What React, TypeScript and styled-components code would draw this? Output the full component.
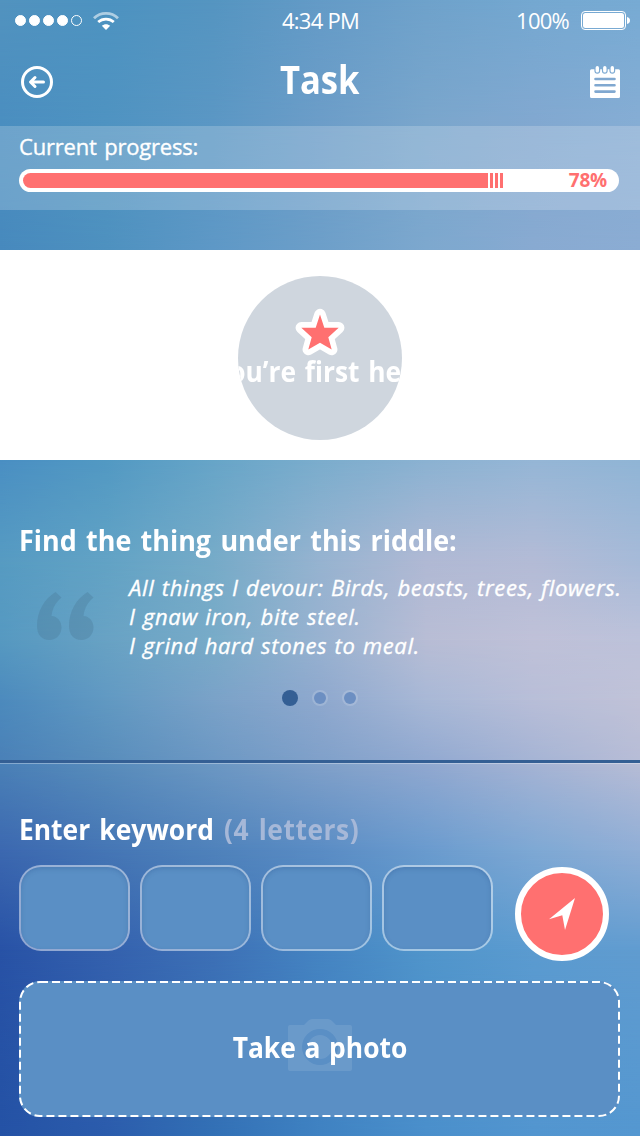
import React from "react";
import styled, { createGlobalStyle } from "styled-components";

const CORAL = "#ff7070";
const NAVY = "#345f94";
const FIELD = "#5a8fc5";

const GlobalStyle = createGlobalStyle`
  *, *::before, *::after { box-sizing: border-box; }
  body { margin: 0; }
  h1, h2, p { margin: 0; }
  button, input { font: inherit; margin: 0; padding: 0; border: 0; background: none; }
`;

/* Colour mesh behind the screen: each row blends into the next one. */
const mesh: { y: number; colors: string[] }[] = [
  { y: 0, colors: ["#5293bf", "#4d93c1", "#5595c1", "#649bc7", "#6fa2cb", "#74a8d1", "#77abd4"] },
  { y: 125, colors: ["#4a8ec0", "#4f93c1", "#5b97c4", "#6c9dc8", "#7aa6cc", "#82a8d0", "#86add4"] },
  { y: 250, colors: ["#4789bd", "#4e91bf", "#5e98c6", "#6d9fc9", "#7da8ce", "#88aad1", "#8bacd3"] },
  { y: 460, colors: ["#4a8fc3", "#5299c3", "#67a5c8", "#7badcd", "#8bb2d2", "#95b6d6", "#90b5d6"] },
  { y: 560, colors: ["#569bc2", "#62a3c5", "#76abc8", "#96b3d0", "#b0b9d4", "#b3bbd6", "#a6bad8"] },
  { y: 640, colors: ["#5699c1", "#68a2c4", "#78abc8", "#98b2d0", "#b8bdd5", "#bfc1d8", "#bdc2da"] },
  { y: 700, colors: ["#4c8abd", "#6199c2", "#7aa2c8", "#8ea8ce", "#a8b8d6", "#b8bed8", "#c0c2d8"] },
  { y: 765, colors: ["#4a80b7", "#588cbb", "#6b97c3", "#7fa0c9", "#90a8d0", "#a4b3d4", "#b6bcd6"] },
  { y: 850, colors: ["#3c68b0", "#4576b5", "#4f82bb", "#5a8cc4", "#6a9bce", "#7ea8d4", "#90aed6"] },
  { y: 950, colors: ["#2852a6", "#3461ae", "#3d70b6", "#4584c2", "#5095cb", "#5b9bd0", "#609cd0"] },
  { y: 1136, colors: ["#2452a5", "#2b5cac", "#3270b5", "#3f82c2", "#4a8fcb", "#5295cf", "#5497d0"] },
];

const Screen = styled.main`
  position: relative;
  isolation: isolate;
  display: flex;
  flex-direction: column;
  width: 640px;
  height: 1136px;
  overflow: hidden;
  color: #fff;
  font-family: "Open Sans", "Noto Sans", sans-serif;
`;

const MeshLayer = styled.div<{ $from: number; $to: number; $colors: string[] }>`
  position: absolute;
  inset: 0;
  z-index: -1;
  background: linear-gradient(to right, ${(p) => p.$colors.join(", ")});
  mask-image: linear-gradient(to bottom, transparent ${(p) => p.$from}px, #000 ${(p) => p.$to}px);
`;

const Header = styled.header`
  display: flex;
  flex-direction: column;
  height: 250px;
`;

const StatusBar = styled.div`
  display: grid;
  grid-template-columns: 1fr auto 1fr;
  align-items: center;
  height: 41px;
  padding: 0 10px 0 15px;
`;

const StatusGroup = styled.div<{ $end?: boolean }>`
  display: flex;
  align-items: center;
  justify-content: ${(p) => (p.$end ? "flex-end" : "flex-start")};
  gap: 11px;
`;

const Signal = styled.div`
  display: flex;
  gap: 3px;
`;

const SignalDot = styled.span<{ $empty?: boolean }>`
  width: 11px;
  height: 11px;
  border: 1px solid #fff;
  border-radius: 50%;
  background: ${(p) => (p.$empty ? "transparent" : "#fff")};
`;

const StatusText = styled.span`
  padding-right: 1px;
  font-size: 22px;
  line-height: 41px;
  letter-spacing: -0.75px;
  white-space: nowrap;
`;

const Clock = styled(StatusText)`
  padding-right: 4px;
`;

const NavBar = styled.nav`
  display: grid;
  grid-template-columns: 34px 1fr 34px;
  align-items: center;
  height: 85px;
  padding: 0 18px 3px 20px;
`;

const IconButton = styled.button`
  display: flex;
  justify-content: center;
  color: #fff;
`;

const Title = styled.h1`
  text-align: center;
  font-size: 40px;
  line-height: 54px;
  font-weight: 700;
  transform: scaleX(0.865);
  padding: 0 3px 6px 0;
`;

const ProgressPanel = styled.section`
  height: 84px;
  padding: 6px 20px 0 19px;
  background: rgba(255, 255, 255, 0.2);
`;

const ProgressLabel = styled.p`
  font-size: 22px;
  line-height: 29px;
  letter-spacing: -0.2px;
  word-spacing: 2px;
  -webkit-text-stroke: 0.35px currentColor;
`;

const ProgressTrack = styled.div`
  display: flex;
  align-items: center;
  width: 600px;
  height: 23px;
  margin-top: 8px;
  padding: 0 12px 0 4px;
  border-radius: 12px;
  background: #fff;
`;

const ProgressFill = styled.div`
  width: 465px;
  height: 15px;
  border-radius: 8px 0 0 8px;
  background: ${CORAL};
`;

const ProgressTick = styled.span`
  width: 3px;
  height: 15px;
  margin-left: 2px;
  background: ${CORAL};
`;

const ProgressValue = styled.span`
  margin-left: auto;
  color: ${CORAL};
  font-size: 19px;
  line-height: 23px;
  font-weight: 700;
  letter-spacing: -0.2px;
`;

const Banner = styled.section`
  display: flex;
  align-items: center;
  justify-content: center;
  height: 210px;
  padding-bottom: 4px;
  padding-top: 8px;
  background: #fff;
`;

const Badge = styled.div`
  display: flex;
  flex-direction: column;
  align-items: center;
  width: 164px;
  height: 164px;
  margin-bottom: -2px;
  padding-top: 31px;
  border-radius: 50%;
  overflow: hidden;
  background: #cfd6de;
`;

const BadgeText = styled.p`
  margin-top: -4px;
  padding-left: 10px;
  font-size: 28px;
  line-height: 36px;
  font-weight: 700;
  white-space: nowrap;
  word-spacing: 2px;
  transform: scaleX(0.94);
`;

const Riddle = styled.section`
  display: flex;
  flex-direction: column;
  height: 300px;
  padding: 61px 19px 0;
`;

const Heading = styled.h2<{ $scale: number }>`
  align-self: flex-start;
  font-size: 29px;
  line-height: 38px;
  font-weight: 700;
  white-space: nowrap;
  word-spacing: 2.5px;
  transform: scaleX(${(p) => p.$scale});
  transform-origin: left;
`;

const RiddleBody = styled.div`
  display: flex;
  margin-top: 14px;
`;

const QuoteMark = styled.svg`
  flex: none;
  width: 58px;
  height: 50px;
  margin: 18px 35px 0 17px;
`;

const RiddleText = styled.p`
  font-size: 22px;
  line-height: 29px;
  font-style: italic;
  letter-spacing: 0.65px;
  word-spacing: 1px;
  white-space: nowrap;
  -webkit-text-stroke: 0.35px currentColor;
`;

const Pager = styled.div`
  display: flex;
  justify-content: center;
  align-items: center;
  gap: 14px;
  margin-top: 30px;
`;

const PagerDot = styled.span<{ $active?: boolean }>`
  width: 16px;
  height: 16px;
  border-radius: 50%;
  border: ${(p) => (p.$active ? "0" : "2px solid rgba(255, 255, 255, 0.15)")};
  background: ${(p) => (p.$active ? NAVY : "#6c8fc2")};
  background-clip: padding-box;
`;

const Answer = styled.section`
  display: flex;
  flex-direction: column;
  height: 376px;
  padding: 47px 19px 0;
  border-top: 3px solid ${NAVY};
  box-shadow: inset 0 1px 0 rgba(255, 255, 255, 0.32);
`;

const Hint = styled.span`
  margin-left: 1px;
  color: #a6b8d8;
  letter-spacing: 0.6px;
`;

const KeywordRow = styled.form`
  display: flex;
  gap: 10px;
  height: 96px;
  margin-top: 17px;
`;

const LetterField = styled.input`
  width: 111px;
  height: 86px;
  border: 2px solid rgba(255, 255, 255, 0.48);
  border-radius: 22px;
  background: ${FIELD};
  background-clip: padding-box;
  box-shadow: inset 0 2px 4px rgba(40, 80, 140, 0.25);
  text-align: center;
  color: #fff;
`;

const SendButton = styled.button`
  display: flex;
  align-items: center;
  justify-content: center;
  width: 94px;
  height: 94px;
  margin: 2px 0 0 12px;
  border: 6px solid #fff;
  border-radius: 50%;
  background: ${CORAL};
`;

const PhotoButton = styled.button`
  display: grid;
  place-items: center;
  width: 601px;
  height: 136px;
  margin-top: 20px;
  border-radius: 21px;
  color: #fff;

  & > * { grid-area: 1 / 1; }
`;

const PhotoCamera = styled.svg`
  margin-bottom: 8px;
`;

const PhotoLabel = styled.span`
  font-size: 29px;
  line-height: 38px;
  font-weight: 700;
  white-space: nowrap;
  word-spacing: 2px;
  transform: scaleX(0.91);
  padding-bottom: 5px;
`;

const WifiIcon = () => (
  <svg width="26" height="18" viewBox="0 0 26 18" fill="none">
    <path d="M1 6.3C7.600 -.2 18.400 -.2 25 6.300" stroke="#fff" strokeOpacity=".55" strokeWidth="2.800" />
    <path d="M5.200 10.100C9.500 6.100 16.500 6.100 20.800 10.100" stroke="#fff" strokeWidth="2.700" />
    <path d="M8.800 13.700C11.200 11.600 14.800 11.600 17.200 13.700L13 18Z" fill="#fff" />
  </svg>
);

const BatteryIcon = () => (
  <svg width="49" height="19" viewBox="0 0 49 19">
    <rect x=".5" y=".5" width="44" height="18" rx="3.500" fill="none" stroke="#fff" />
    <rect x="2" y="2" width="41" height="15" rx="2.500" fill="#fff" />
    <path d="M46 6C50 6.500 50 12.500 46 13Z" fill="#fff" />
  </svg>
);

const BackIcon = () => (
  <svg width="32" height="32" viewBox="0 0 32 32" fill="none" stroke="#fff" strokeWidth="3" strokeLinecap="round" strokeLinejoin="round">
    <circle cx="16" cy="16" r="14.500" />
    <path d="M22.500 16H10M14 11.500L9.500 16L14 20.500" />
  </svg>
);

const NotepadIcon = () => (
  <svg width="30" height="32" viewBox="0 0 30 32">
    <path
      fill="#fff"
      d="M1.500 3.300H4.400V4.800a2.900 2.900 0 0 0 5.800 0V3.300H11.900V4.800a2.900 2.900 0 0 0 5.800 0V3.300H19.400V4.800a2.900 2.900 0 0 0 5.800 0V3.300H28.500A1.500 1.500 0 0 1 30 4.800V30.500A1.500 1.500 0 0 1 28.500 32H1.500A1.500 1.500 0 0 1 0 30.500V4.800A1.500 1.500 0 0 1 1.500 3.300Z"
    />
    <g fill="#fff">
      <rect x="5.600" y="0" width="3.400" height="6.600" rx="1.700" />
      <rect x="13.100" y="0" width="3.400" height="6.600" rx="1.700" />
      <rect x="20.600" y="0" width="3.400" height="6.600" rx="1.700" />
    </g>
    <path d="M5.500 13H24.500M5.500 19.300H24.500M5.500 25.600H24.500" stroke="#80a8d0" strokeWidth="2.600" strokeLinecap="round" />
  </svg>
);

const StarIcon = () => (
  <svg width="50" height="50" viewBox="0 0 50 50">
    <path
      d="M25 7.500L29.300 20.800H43.700L33.300 30.200L36.700 42.500L25 35.800L13.300 42.500L16.700 30.200L6.300 20.800H20.700Z"
      fill={CORAL}
      stroke="#fff"
      strokeWidth="11.500"
      strokeLinejoin="round"
      paintOrder="stroke"
    />
  </svg>
);

const SendIcon = () => (
  <svg width="28" height="34" viewBox="0 0 28 34">
    <path d="M27 1L1 22.300L14.300 18.300L17 33Z" fill="#fff" />
  </svg>
);

const DashedFrame = () => (
  <svg width="601" height="136" viewBox="0 0 601 136">
    <rect width="601" height="136" rx="21" fill={FIELD} />
    <rect x="1" y="1" width="599" height="134" rx="20" fill="none" stroke="#fff" strokeWidth="2" strokeDasharray="8 4" />
  </svg>
);

export default function App() {
  return (
    <Screen>
      <GlobalStyle />
      {mesh.map((row, i) => (
        <MeshLayer key={row.y} $from={i ? mesh[i - 1].y : -1} $to={row.y} $colors={row.colors} />
      ))}

      <Header>
        <StatusBar>
          <StatusGroup>
            <Signal>
              <SignalDot />
              <SignalDot />
              <SignalDot />
              <SignalDot />
              <SignalDot $empty />
            </Signal>
            <WifiIcon />
          </StatusGroup>
          <Clock>4:34 PM</Clock>
          <StatusGroup $end>
            <StatusText>100%</StatusText>
            <BatteryIcon />
          </StatusGroup>
        </StatusBar>

        <NavBar>
          <IconButton aria-label="Back">
            <BackIcon />
          </IconButton>
          <Title>Task</Title>
          <IconButton aria-label="Notes">
            <NotepadIcon />
          </IconButton>
        </NavBar>

        <ProgressPanel>
          <ProgressLabel>Current progress:</ProgressLabel>
          <ProgressTrack>
            <ProgressFill />
            <ProgressTick />
            <ProgressTick />
            <ProgressTick />
            <ProgressValue>78%</ProgressValue>
          </ProgressTrack>
        </ProgressPanel>
      </Header>

      <Banner>
        <Badge>
          <StarIcon />
          <BadgeText>You’re first here!</BadgeText>
        </Badge>
      </Banner>

      <Riddle>
        <Heading $scale={0.928}>Find the thing under this riddle:</Heading>
        <RiddleBody>
          <QuoteMark viewBox="0 0 58 50" fill="#4a7896" fillOpacity=".34">
            <path d="M19.500 1L25.500 6.500C19.500 11.500 16.500 17 15.500 25C21.500 25.500 25.500 30 25.500 36.500C25.500 43.500 20 49 13.500 49C5.500 49 1 43.500 1 35C1 20 8 8.500 19.500 1Z" />
            <path d="M51.500 1L57.500 6.500C51.500 11.500 48.500 17 47.500 25C53.500 25.500 57.500 30 57.500 36.500C57.500 43.500 52 49 45.500 49C37.500 49 33 43.500 33 35C33 20 40 8.500 51.500 1Z" />
          </QuoteMark>
          <RiddleText>
            All things I devour: Birds, beasts, trees, flowers.
            <br />
            I gnaw iron, bite steel.
            <br />
            I grind hard stones to meal.
          </RiddleText>
        </RiddleBody>
        <Pager>
          <PagerDot $active />
          <PagerDot />
          <PagerDot />
        </Pager>
      </Riddle>

      <Answer>
        <Heading $scale={0.91}>
          Enter keyword <Hint>(4 letters)</Hint>
        </Heading>
        <KeywordRow>
          <LetterField aria-label="Letter 1" maxLength={1} />
          <LetterField aria-label="Letter 2" maxLength={1} />
          <LetterField aria-label="Letter 3" maxLength={1} />
          <LetterField aria-label="Letter 4" maxLength={1} />
          <SendButton type="button" aria-label="Send">
            <SendIcon />
          </SendButton>
        </KeywordRow>
        <PhotoButton>
          <DashedFrame />
          <PhotoCamera width="64" height="52" viewBox="0 0 64 52">
            <path
              fill="#fff"
              fillOpacity=".1"
              fillRule="evenodd"
              d="M2 6H16L20.500 1.500Q22 0 24 0H40Q42 0 43.500 1.500L48 6H62Q64 6 64 8V50Q64 52 62 52H2Q0 52 0 50V8Q0 6 2 6ZM32 10A18 18 0 1 0 32 46A18 18 0 1 0 32 10ZM32 16A12 12 0 1 1 32 40A12 12 0 1 1 32 16Z"
            />
          </PhotoCamera>
          <PhotoLabel>Take a photo</PhotoLabel>
        </PhotoButton>
      </Answer>
    </Screen>
  );
}
